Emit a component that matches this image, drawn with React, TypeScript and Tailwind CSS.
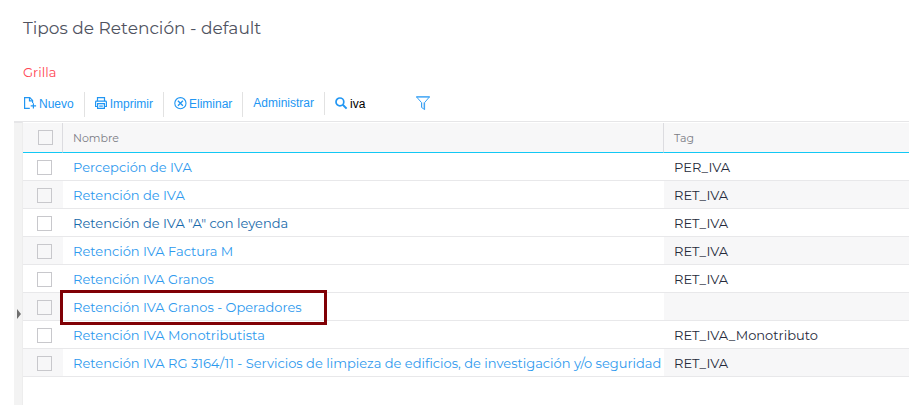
import { useState } from 'react';

type Row = {
  name: string;
  tag: string;
  visited?: boolean;
  marked?: boolean;
};

const ROWS: Row[] = [
  { name: 'Percepción de IVA', tag: 'PER_IVA' },
  { name: 'Retención de IVA', tag: 'RET_IVA' },
  { name: 'Retención de IVA "A" con leyenda', tag: 'RET_IVA', visited: true },
  { name: 'Retención IVA Factura M', tag: 'RET_IVA' },
  { name: 'Retención IVA Granos', tag: 'RET_IVA' },
  { name: 'Retención IVA Granos - Operadores', tag: '', marked: true },
  { name: 'Retención IVA Monotributista', tag: 'RET_IVA_Monotributo' },
  {
    name: 'Retención IVA RG 3164/11 - Servicios de limpieza de edificios, de investigación y/o seguridad',
    tag: 'RET_IVA',
  },
];

function NewIcon() {
  return (
    <svg width="13" height="13" viewBox="0 0 13 13" fill="none" stroke="currentColor" strokeWidth="1.2">
      <path d="M5.8 11.4H.6V.6H5.8L8.6 3.4V6" />
      <path d="M5.5 .6V3.8H8.6" />
      <path d="M9.4 6.2V11.6M6.7 8.9H12.1" />
    </svg>
  );
}

function PrintIcon() {
  return (
    <svg width="13" height="13" viewBox="0 0 13 13" fill="none" stroke="currentColor" strokeWidth="1.2">
      <path d="M2.5 4.2V.6H9.5V4.2" />
      <path d="M2.5 9.5H.6V5Q.6 4.2 1.4 4.2H10.6Q11.4 4.2 11.4 5V9.5H9.5" />
      <path d="M2.6 6.6H9.4V11.4H2.6Z" />
      <path d="M4.2 9.1H7.8" />
    </svg>
  );
}

function DeleteIcon() {
  return (
    <svg width="13" height="13" viewBox="0 0 13 13" fill="none" stroke="currentColor" strokeWidth="1.1">
      <circle cx="6.4" cy="6.2" r="5.6" />
      <path d="M3.9 3.7L8.9 8.7M8.9 3.7L3.9 8.7" strokeWidth="1.3" />
    </svg>
  );
}

function SearchIcon() {
  return (
    <svg width="13" height="13" viewBox="0 0 13 13" fill="none" stroke="currentColor">
      <circle cx="4.9" cy="4.9" r="3.9" strokeWidth="1.7" />
      <path d="M7.8 7.8L11.6 11.6" strokeWidth="2" />
    </svg>
  );
}

function FilterIcon() {
  return (
    <svg width="14" height="15" viewBox="0 0 14 15" fill="none" stroke="currentColor">
      <path d="M6.5 6.5H8.6V13.5L6.5 11.8Z" fill="#bcd9f3" stroke="none" />
      <path d="M.8 1.2L5.5 6.6V11.4L8.6 13.6V6.6L13.2 1.2" strokeWidth="0.9" />
      <path d="M.2 .9H13.8" strokeWidth="1.3" />
    </svg>
  );
}

const checkboxClass =
  'block h-[15px] w-[15px] appearance-none border border-[#c8c8cc] bg-transparent checked:bg-[#2196f3]';

export default function App() {
  const [query, setQuery] = useState('iva');

  return (
    <div className="flex min-h-screen flex-col bg-white pl-3.5 font-[Montserrat,Inter,sans-serif]">
      <header className="pl-[9px] pt-4">
        <h1 className="text-[17px] leading-6 text-[#50535f]">Tipos de Retención - default</h1>
        <h2 className="mt-[22px] text-[13px] leading-5 text-[#ff4553]">Grilla</h2>
      </header>

      <div className="mt-2.5 flex h-[30px] items-start border-b border-[#e6e6e8] pl-2.5 font-['Liberation_Sans',Arial,sans-serif] text-xs text-[#2196f3]">
        <button type="button" className="flex h-[25px] items-center gap-0.5 border-r border-[#e2e2e2] pb-0.5 pr-2.5">
          <NewIcon />
          Nuevo
        </button>
        <button type="button" className="flex h-[25px] items-center gap-0.5 border-r border-[#e2e2e2] px-2.5 pb-0.5">
          <PrintIcon />
          Imprimir
        </button>
        <button type="button" className="flex h-[25px] items-center gap-0.5 border-r border-[#e2e2e2] px-2.5 pb-0.5">
          <DeleteIcon />
          Eliminar
        </button>
        <button type="button" className="flex h-[23px] items-center border-r border-[#e2e2e2] px-2.5 pb-0.5">
          Administrar
        </button>
        <label className="flex h-[23px] items-center gap-0.5 pl-2.5">
          <SearchIcon />
          <input
            type="text"
            aria-label="Buscar"
            value={query}
            onChange={(e) => setQuery(e.target.value)}
            className="h-[23px] w-[66px] bg-transparent text-black outline-none"
          />
        </label>
        <button type="button" aria-label="Filtrar" className="flex h-[23px] items-center">
          <FilterIcon />
        </button>
      </div>

      <div className="flex flex-1">
        <button
          type="button"
          aria-label="Mostrar panel"
          className="flex w-[9px] shrink-0 items-start justify-end border-r border-t border-r-[#ededed] border-t-[#e6e6e8] bg-[#f3f3f3] pr-px pt-[186px]"
        >
          <svg width="4" height="10" viewBox="0 0 4 10" fill="#6f6f6f">
            <path d="M0 0L4 5L0 10Z" />
          </svg>
        </button>

        <div className="min-w-0 flex-1 pt-px">
          <table className="w-full table-fixed border-separate border-spacing-0 text-left">
            <colgroup>
              <col className="w-10" />
              <col />
              <col className="w-[245px]" />
            </colgroup>
            <thead>
              <tr className="h-[30px] bg-[#f7f7f8] text-[11px] text-[#7b7c85]">
                <th className="border-b border-r border-b-[#12c8f5] border-r-[#dcdce0] p-0 pl-[15px]">
                  <input type="checkbox" aria-label="Seleccionar todo" className={checkboxClass} />
                </th>
                <th className="border-b border-r border-b-[#12c8f5] border-r-[#dcdce0] p-0 pl-2.5 pt-0.5 font-normal">
                  Nombre
                </th>
                <th className="border-b border-[#12c8f5] p-0 pl-2.5 pt-0.5 font-normal">Tag</th>
              </tr>
            </thead>
            <tbody>
              {ROWS.map((row) => (
                <tr key={row.name} className="group h-7 text-[13px] leading-5">
                  <td className="border-b border-[#e8e8ea] p-0 pl-3.5 pt-px group-even:bg-[#f7f7f8]">
                    <input type="checkbox" aria-label={row.name} className={checkboxClass} />
                  </td>
                  <td className="relative whitespace-nowrap border-b border-[#e8e8ea] p-0 pl-2.5">
                    <a href="#" className={row.visited ? 'text-[#1769aa]' : 'text-[#2e99ee]'}>
                      {row.name}
                    </a>
                    {row.marked && (
                      <span className="pointer-events-none absolute -left-[3px] -top-[3px] h-[35px] w-[267px] border-[3px] border-[#800005]" />
                    )}
                  </td>
                  <td className="border-b border-[#e8e8ea] p-0 pl-2.5 text-[#252a3a] group-even:bg-[#f7f7f8]">
                    {row.tag}
                  </td>
                </tr>
              ))}
            </tbody>
          </table>
        </div>
      </div>
    </div>
  );
}
